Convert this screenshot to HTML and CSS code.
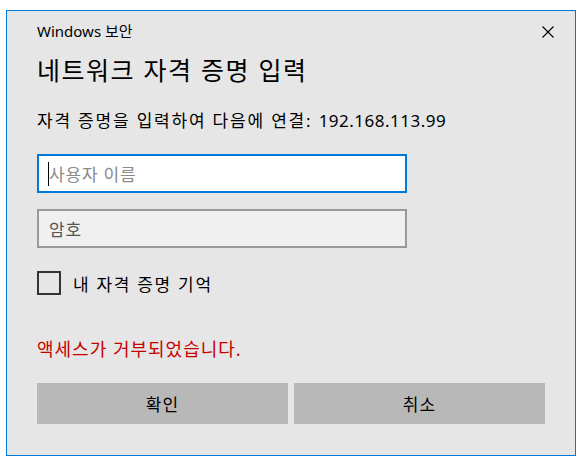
FILE: index.html
```html
<!DOCTYPE html>
<html lang="ko">
<head>
    <meta charset="UTF-8">
    <meta name="viewport" content="width=device-width, initial-scale=1.0">
    <title>Windows 보안</title>
    <link rel="stylesheet" href="styles.css">
</head>
<body>
    <div class="dialog">
        <div class="dialog-header">
            <span class="dialog-caption">Windows 보안</span>
            <button class="close-button" aria-label="닫기">
                <svg width="12" height="12" viewBox="0 0 12 12">
                    <path d="M0.5 0.5 L11.5 11.5 M11.5 0.5 L0.5 11.5" stroke="#000" stroke-width="1.1" fill="none"/>
                </svg>
            </button>
        </div>

        <h1>네트워크 자격 증명 입력</h1>
        <p class="intro">자격 증명을 입력하여 다음에 연결: <span class="host">192.168.113.99</span></p>

        <div class="field field-active">
            <span class="caret"></span>
            <span class="placeholder">사용자 이름</span>
        </div>
        <div class="field field-disabled">
            <span class="placeholder">암호</span>
        </div>

        <label class="remember">
            <span class="checkbox"></span>
            <span>내 자격 증명 기억</span>
        </label>

        <p class="error">액세스가 거부되었습니다.</p>

        <div class="buttons">
            <button class="dialog-button">확인</button>
            <button class="dialog-button">취소</button>
        </div>
    </div>
</body>
</html>
```

FILE: styles.css
```css
* {
    margin: 0;
    padding: 0;
    box-sizing: border-box;
}

body {
    font-family: "Segoe UI", "Noto Sans", "Noto Sans CJK KR", sans-serif;
    background: #ffffff;
    color: #000000;
    padding: 10px 0 0 6px;
}

.dialog {
    width: 570px;
    height: 446px;
    border: 1px solid #0078d7;
    background: #e6e6e6;
    padding: 0 30px;
}

.dialog-header {
    display: flex;
    align-items: center;
    justify-content: space-between;
    height: 39px;
}

.dialog-caption {
    font-size: 15px;
    color: #000;
}

.close-button {
    background: none;
    border: none;
    width: 12px;
    height: 12px;
    margin-right: -9px;
    margin-top: 3px;
    display: flex;
}

h1 {
    font-family: "Noto Sans CJK KR", sans-serif;
    font-size: 25px;
    font-weight: 400;
    letter-spacing: 1.5px;
    line-height: 30px;
    margin-top: 4px;
}

.intro {
    font-size: 17px;
    line-height: 24px;
    margin-top: 25px;
    letter-spacing: 1.8px;
}

.host {
    letter-spacing: 0.5px;
}

.field {
    width: 370px;
    height: 39px;
    border: 2px solid #999999;
    background: #f0f0f0;
    display: flex;
    align-items: center;
    padding-left: 9px;
    font-size: 17px;
    margin-top: 16px;
}

.field-active {
    border-color: #0078d7;
    background: #ffffff;
    margin-top: 21px;
}

.caret {
    width: 1px;
    height: 24px;
    background: #000;
}

.placeholder {
    color: #8a8a8a;
    letter-spacing: 0.8px;
}

.field-disabled .placeholder {
    color: #555555;
    padding-left: 1px;
}

.remember {
    display: flex;
    align-items: center;
    gap: 12px;
    height: 24px;
    margin-top: 23px;
    font-size: 17px;
    letter-spacing: 1.7px;
}

.checkbox {
    width: 24px;
    height: 24px;
    border: 2px solid #333333;
}

.error {
    color: #c80000;
    font-size: 18px;
    line-height: 24px;
    margin-top: 42px;
    letter-spacing: 1px;
}

.buttons {
    display: flex;
    gap: 6px;
    margin-top: 22px;
}

.dialog-button {
    flex: 1;
    height: 41px;
    border: none;
    background: #b8b8b8;
    font-family: inherit;
    font-size: 17px;
    letter-spacing: 1px;
    color: #000;
}
```
